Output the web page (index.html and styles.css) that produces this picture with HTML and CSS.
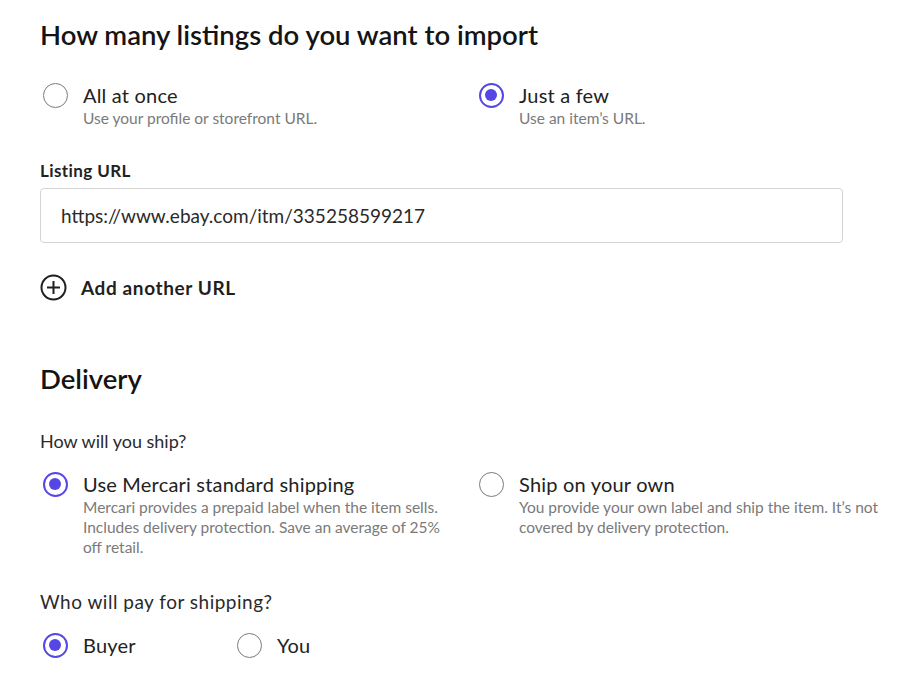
FILE: index.html
```html
<!DOCTYPE html>
<html>
<head>
<meta charset="utf-8">
<link rel="stylesheet" href="styles.css">
</head>
<body>
<main class="page">
  <section class="section">
    <h2 class="title">How many listings do you want to import</h2>
    <div class="options">
      <div class="option">
        <span class="radio"></span>
        <div class="opt-text">
          <div class="opt-label">All at once</div>
          <div class="opt-desc">Use your profile or storefront URL.</div>
        </div>
      </div>
      <div class="option">
        <span class="radio checked"></span>
        <div class="opt-text">
          <div class="opt-label">Just a few</div>
          <div class="opt-desc">Use an item’s URL.</div>
        </div>
      </div>
    </div>
    <div class="field">
      <div class="field-label">Listing URL</div>
      <div class="input">https://www.ebay.com/itm/335258599217</div>
    </div>
    <div class="add">
      <svg class="add-icon" width="27" height="27" viewBox="0 0 27 27">
        <circle cx="13.5" cy="13.5" r="12" fill="none" stroke="#1f1f1f" stroke-width="2"/>
        <path d="M13.5 7v13M7 13.5h13" stroke="#1f1f1f" stroke-width="2"/>
      </svg>
      <span class="add-text">Add another URL</span>
    </div>
  </section>

  <section class="section delivery">
    <h2 class="title">Delivery</h2>
    <div class="question">How will you ship?</div>
    <div class="options">
      <div class="option">
        <span class="radio checked"></span>
        <div class="opt-text">
          <div class="opt-label">Use Mercari standard shipping</div>
          <div class="opt-desc">Mercari provides a prepaid label when the item sells. Includes delivery protection. Save an average of 25% off retail.</div>
        </div>
      </div>
      <div class="option">
        <span class="radio"></span>
        <div class="opt-text">
          <div class="opt-label">Ship on your own</div>
          <div class="opt-desc">You provide your own label and ship the item. It’s not covered by delivery protection.</div>
        </div>
      </div>
    </div>
    <div class="question q2">Who will pay for shipping?</div>
    <div class="options small">
      <div class="option">
        <span class="radio checked"></span>
        <div class="opt-text"><div class="opt-label">Buyer</div></div>
      </div>
      <div class="option">
        <span class="radio"></span>
        <div class="opt-text"><div class="opt-label">You</div></div>
      </div>
    </div>
  </section>
</main>
</body>
</html>
```
FILE: styles.css
```css
* { box-sizing: border-box; }
html, body { margin: 0; padding: 0; background: #fff; }
body {
  font-family: "Lato", "Open Sans", sans-serif;
  color: #1f1f1f;
}
.page {
  padding: 18px 20px 0 40px;
}
.title {
  margin: 0;
  font-size: 27.5px;
  font-weight: 600;
  line-height: 34px;
  color: #141414;
}
.options {
  display: grid;
  grid-template-columns: 436px 1fr;
  margin-top: 30px;
}
.option {
  display: flex;
  align-items: flex-start;
}
.radio {
  flex: none;
  width: 25px;
  height: 25px;
  border-radius: 50%;
  border: 1.5px solid #7a7a7a;
  margin: 1px 15px 0 3px;
  position: relative;
}
.radio.checked {
  border: 2.5px solid #5546e6;
}
.radio.checked::after {
  content: "";
  position: absolute;
  left: 4px; top: 4px;
  width: 12px; height: 12px;
  border-radius: 50%;
  background: #5546e6;
}
.opt-label {
  font-size: 20px;
  letter-spacing: 0.2px;
  line-height: 26px;
  color: #222;
}
.opt-desc {
  font-size: 15.5px;
  line-height: 20px;
  color: #7a7a7a;
  max-width: 372px;
}
.field { margin: 32px 58px 0 0; }
.field-label {
  font-size: 17px;
  letter-spacing: 0.4px;
  font-weight: 700;
  line-height: 22px;
  color: #222;
}
.input {
  margin-top: 6px;
  height: 55px;
  border: 1px solid #d4d4d4;
  border-radius: 4px;
  padding: 0 20px;
  display: flex;
  align-items: center;
  font-size: 19px;
  color: #2a2a2a;
}
.add {
  display: flex;
  align-items: center;
  margin-top: 31px;
}
.add-icon { margin-right: 14px; }
.add-text {
  font-size: 19px;
  letter-spacing: 0.6px;
  font-weight: 700;
  color: #1f1f1f;
}
.delivery { margin-top: 61px; }
.question {
  margin-top: 33px;
  font-size: 18px;
  line-height: 24px;
  color: #2a2a2a;
}
.delivery .options { margin-top: 18px; }
.question.q2 {
  margin-top: 33px;
  font-size: 19px;
  letter-spacing: 0.5px;
}
.options.small {
  grid-template-columns: 194px 1fr;
}
.delivery .options.small { margin-top: 18px; }
```
